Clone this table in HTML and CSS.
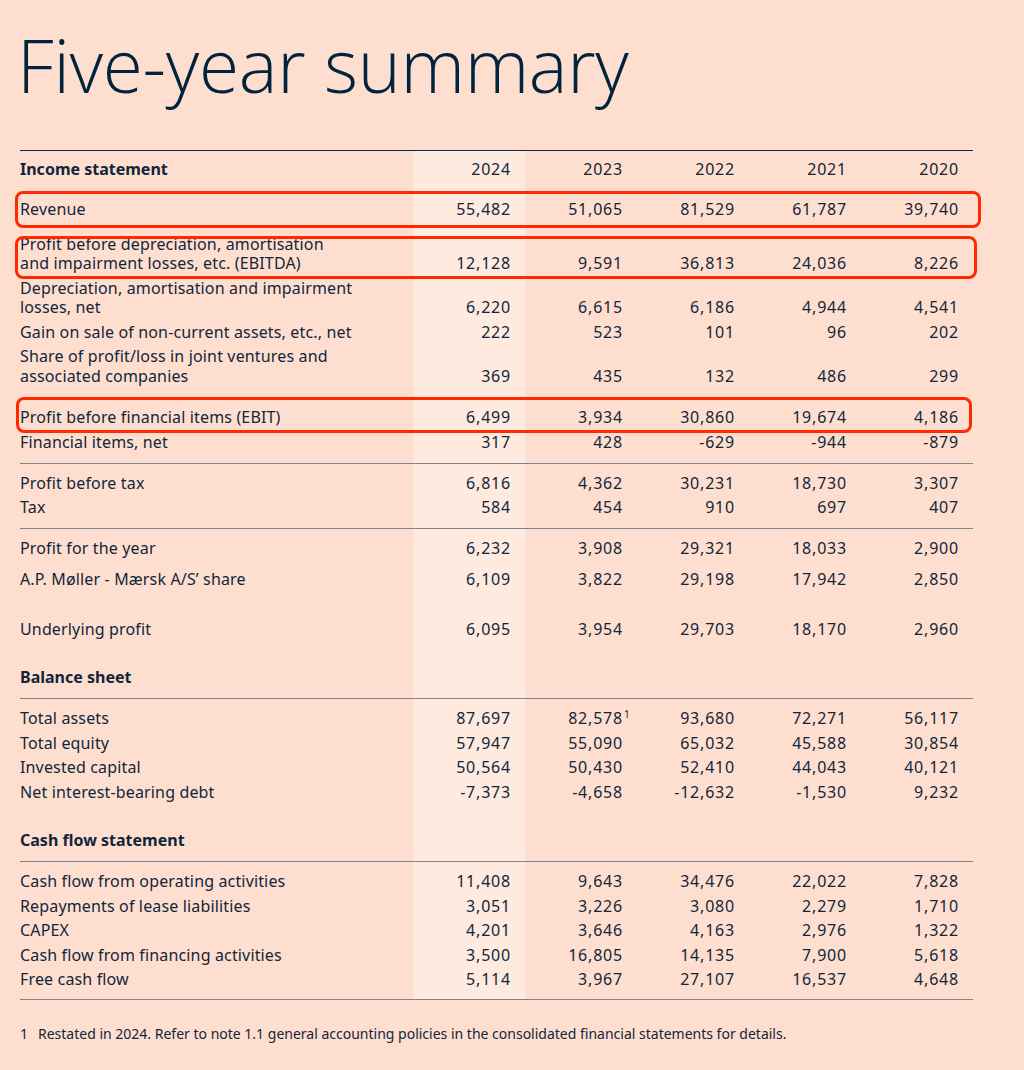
FILE: index.html
```html
<!DOCTYPE html>
<html lang="en">
<head>
<meta charset="utf-8">
<title>Five-year summary</title>
<link rel="stylesheet" href="styles.css">
</head>
<body>
<div class="page">
  <h1 class="title">Five-year summary</h1>
  <table class="summary">
    <colgroup>
      <col class="c-label"><col class="c-num"><col class="c-num"><col class="c-num"><col class="c-num"><col class="c-num">
    </colgroup>
    <tbody>
      <tr class="r-head top-rule"><th class="lbl">Income statement</th><td>2024</td><td>2023</td><td>2022</td><td>2021</td><td>2020</td></tr>
      <tr class="r-rev"><th>Revenue</th><td>55,482</td><td>51,065</td><td>81,529</td><td>61,787</td><td>39,740</td></tr>
      <tr class="r-ebitda"><th>Profit before depreciation, amortisation<br>and impairment losses, etc. (EBITDA)</th><td>12,128</td><td>9,591</td><td>36,813</td><td>24,036</td><td>8,226</td></tr>
      <tr><th>Depreciation, amortisation and impairment<br>losses, net</th><td>6,220</td><td>6,615</td><td>6,186</td><td>4,944</td><td>4,541</td></tr>
      <tr><th>Gain on sale of non-current assets, etc., net</th><td>222</td><td>523</td><td>101</td><td>96</td><td>202</td></tr>
      <tr><th>Share of profit/loss in joint ventures and<br>associated companies</th><td>369</td><td>435</td><td>132</td><td>486</td><td>299</td></tr>
      <tr class="r-ebit"><th>Profit before financial items (EBIT)</th><td>6,499</td><td>3,934</td><td>30,860</td><td>19,674</td><td>4,186</td></tr>
      <tr class="pre-rule"><th>Financial items, net</th><td>317</td><td>428</td><td>-629</td><td>-944</td><td>-879</td></tr>
      <tr class="post-rule"><th>Profit before tax</th><td>6,816</td><td>4,362</td><td>30,231</td><td>18,730</td><td>3,307</td></tr>
      <tr class="pre-rule"><th>Tax</th><td>584</td><td>454</td><td>910</td><td>697</td><td>407</td></tr>
      <tr class="post-rule"><th>Profit for the year</th><td>6,232</td><td>3,908</td><td>29,321</td><td>18,033</td><td>2,900</td></tr>
      <tr class="r-share"><th>A.P. Møller - Mærsk A/S’ share</th><td>6,109</td><td>3,822</td><td>29,198</td><td>17,942</td><td>2,850</td></tr>
      <tr class="r-under"><th>Underlying profit</th><td>6,095</td><td>3,954</td><td>29,703</td><td>18,170</td><td>2,960</td></tr>
      <tr class="r-section pre-rule"><th class="lbl">Balance sheet</th><td></td><td></td><td></td><td></td><td></td></tr>
      <tr class="post-rule"><th>Total assets</th><td>87,697</td><td><span class="fn">82,578<sup>1</sup></span></td><td>93,680</td><td>72,271</td><td>56,117</td></tr>
      <tr><th>Total equity</th><td>57,947</td><td>55,090</td><td>65,032</td><td>45,588</td><td>30,854</td></tr>
      <tr><th>Invested capital</th><td>50,564</td><td>50,430</td><td>52,410</td><td>44,043</td><td>40,121</td></tr>
      <tr><th>Net interest-bearing debt</th><td>-7,373</td><td>-4,658</td><td>-12,632</td><td>-1,530</td><td>9,232</td></tr>
      <tr class="r-section2 pre-rule"><th class="lbl">Cash flow statement</th><td></td><td></td><td></td><td></td><td></td></tr>
      <tr class="post-rule"><th>Cash flow from operating activities</th><td>11,408</td><td>9,643</td><td>34,476</td><td>22,022</td><td>7,828</td></tr>
      <tr><th>Repayments of lease liabilities</th><td>3,051</td><td>3,226</td><td>3,080</td><td>2,279</td><td>1,710</td></tr>
      <tr><th>CAPEX</th><td>4,201</td><td>3,646</td><td>4,163</td><td>2,976</td><td>1,322</td></tr>
      <tr><th>Cash flow from financing activities</th><td>3,500</td><td>16,805</td><td>14,135</td><td>7,900</td><td>5,618</td></tr>
      <tr class="r-last"><th>Free cash flow</th><td>5,114</td><td>3,967</td><td>27,107</td><td>16,537</td><td>4,648</td></tr>
    </tbody>
  </table>
  <p class="footnote"><span class="fn-num">1</span>Restated in 2024. Refer to note 1.1 general accounting policies in the consolidated financial statements for details.</p>

  <div class="mark mark-rev"></div>
  <div class="mark mark-ebitda"></div>
  <div class="mark mark-ebit"></div>
</div>
</body>
</html>
```

FILE: styles.css
```css
html, body {
  margin: 0;
  padding: 0;
  background: #fedfcf;
}
.page {
  position: relative;
  width: 1024px;
  height: 1070px;
  padding: 0 0 0 20px;
  box-sizing: border-box;
  color: #11263c;
  font-family: "Noto Sans", "Open Sans", sans-serif;
}
.title {
  margin: 0 0 0 -3px;
  padding-top: 15px;
  height: 150px;
  box-sizing: border-box;
  font-family: "Open Sans", sans-serif;
  font-weight: 300;
  font-size: 73px;
  line-height: 100px;
  color: #00243d;
  letter-spacing: -0.3px;
  white-space: nowrap;
}
.summary {
  border-collapse: collapse;
  border-spacing: 0;
  width: 953px;
  table-layout: fixed;
  font-size: 16px;
  line-height: 19.5px;
}
.c-label { width: 393px; }
.c-num { width: 112px; }
.summary th {
  text-align: left;
  font-weight: 400;
  letter-spacing: 0.15px;
  padding: 2.5px 0 2.5px 0;
  vertical-align: bottom;
  white-space: nowrap;
}
.summary th.lbl { font-weight: 700; letter-spacing: 0; }
.summary td {
  text-align: right;
  letter-spacing: 0.8px;
  padding: 2.5px 14px 2.5px 0;
  vertical-align: bottom;
  white-space: nowrap;
}
.summary td:nth-child(2) { background: #feeadf; }
.summary tr.top-rule { border-top: 1.5px solid #0e2a44; }
.summary tr.r-head > * { padding-top: 8.75px; }
.summary tr.r-rev > * { padding-top: 18px; }
.summary tr.r-ebitda > * { padding-top: 13px; }
.summary tr.r-ebit > * { padding-top: 19.5px; }
.summary tr.pre-rule > * { padding-bottom: 10.25px; border-bottom: 1px solid #7d8590; }
.summary tr.post-rule > * { padding-top: 10.25px; }
.summary tr.r-share > * { padding-top: 9px; }
.summary tr.r-under > * { padding-top: 28px; }
.summary tr.r-section > * { padding-top: 26px; }
.summary tr.r-section2 > * { padding-top: 26.5px; }
.summary tr.r-last > * { padding-bottom: 9.25px; border-bottom: 1px solid #7d8590; }
.fn { position: relative; }
.fn sup {
  position: absolute;
  left: 100%;
  top: 2px;
  margin-left: 1px;
  font-size: 10px;
  line-height: 1;
  letter-spacing: 0;
}
.footnote {
  margin: 25px 0 0 0;
  font-size: 14px;
  line-height: 18px;
}
.fn-num { display: inline-block; width: 18px; }
.mark {
  position: absolute;
  border: 3px solid #ff2a00;
  border-radius: 8px;
  box-sizing: border-box;
}
.mark-rev { left: 15px; top: 191px; width: 966px; height: 37px; }
.mark-ebitda { left: 15px; top: 236px; width: 962px; height: 43px; }
.mark-ebit { left: 16px; top: 397px; width: 956px; height: 36px; }
```
